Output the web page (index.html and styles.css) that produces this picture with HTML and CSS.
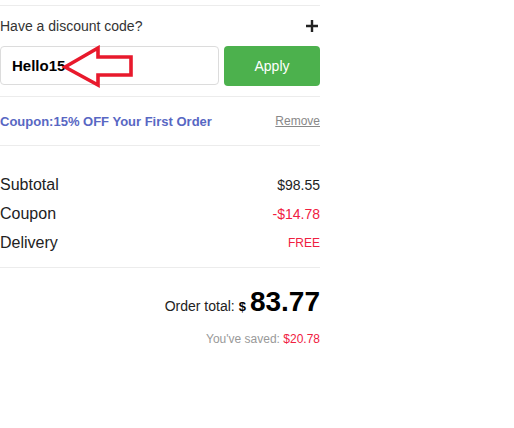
FILE: index.html
```html
<!DOCTYPE html>
<html>
<head>
<meta charset="utf-8">
<link rel="stylesheet" href="styles.css">
</head>
<body>
<div class="panel">
  <div class="discount">
    <div class="discount-head">
      <span>Have a discount code?</span>
      <svg class="plus" width="14" height="14" viewBox="0 0 14 14"><path d="M7 1v12M1 7h12" stroke="#222" stroke-width="2.4"/></svg>
    </div>
    <div class="code-row">
      <div class="code-input">Hello15</div>
      <button class="apply">Apply</button>
      <svg class="arrow" width="80" height="44" viewBox="0 0 80 44"><path d="M4 22 L37 3 L37 12 L70 12 L70 30 L37 30 L37 40 Z" fill="none" stroke="#e8192c" stroke-width="3.6" stroke-linejoin="miter"/></svg>
    </div>
  </div>
  <div class="coupon">
    <span class="coupon-name">Coupon:15% OFF Your First Order</span>
    <span class="remove">Remove</span>
  </div>
  <div class="summary">
    <div class="line"><span class="label">Subtotal</span><span class="val">$98.55</span></div>
    <div class="line"><span class="label">Coupon</span><span class="val red">-$14.78</span></div>
    <div class="line"><span class="label">Delivery</span><span class="val red small">FREE</span></div>
  </div>
  <div class="total">
    <div class="total-row"><span class="total-label">Order total:</span><span class="cur">$</span><span class="amount">83.77</span></div>
    <div class="saved">You've saved: <span class="red">$20.78</span></div>
  </div>
</div>
</body>
</html>
```
FILE: styles.css
```css
html, body { margin: 0; padding: 0; background: #fff; }
body { font-family: "Liberation Sans", Arial, sans-serif; color: #222; }
.panel { width: 320px; padding-top: 5px; }
.discount { border-top: 1px solid #ececec; border-bottom: 1px solid #ececec; padding: 11px 0 10px; }
.discount-head { display: flex; justify-content: space-between; align-items: center; font-size: 14px; color: #333; height: 18px; }
.plus { margin-right: 1px; }
.code-row { display: flex; gap: 5px; margin-top: 11px; position: relative; }
.code-input { box-sizing: border-box; width: 219px; height: 39px; border: 1px solid #dcdcdc; border-radius: 4px; font-size: 15px; font-weight: bold; color: #000; padding-left: 11px; display: flex; align-items: center; }
.apply { flex: 1; height: 40px; border: none; border-radius: 4px; background: #4cb14d; color: #fff; font-family: "Liberation Sans", Arial, sans-serif; font-size: 14px; padding: 0; }
.arrow { position: absolute; left: 61px; top: -1px; }
.coupon { display: flex; justify-content: space-between; align-items: center; height: 48px; border-bottom: 1px solid #ececec; }
.coupon-name { color: #5867c3; font-weight: bold; font-size: 13px; }
.remove { color: #888; font-size: 12px; text-decoration: underline; }
.summary { padding: 24px 0 10px; border-bottom: 1px solid #ececec; }
.line { display: flex; justify-content: space-between; align-items: center; height: 29px; }
.label { font-size: 16px; color: #222; }
.val { font-size: 14px; color: #222; }
.val.small { font-size: 12px; }
.red { color: #f0203f; }
.total { text-align: right; padding-top: 18px; }
.total-row { display: flex; justify-content: flex-end; align-items: baseline; }
.total-label { font-size: 14px; color: #222; margin-right: 4px; }
.cur { font-size: 13px; font-weight: bold; color: #000; margin-right: 4px; }
.amount { font-size: 28px; font-weight: bold; color: #000; }
.saved { font-size: 12px; color: #999; margin-top: 14px; }
```
